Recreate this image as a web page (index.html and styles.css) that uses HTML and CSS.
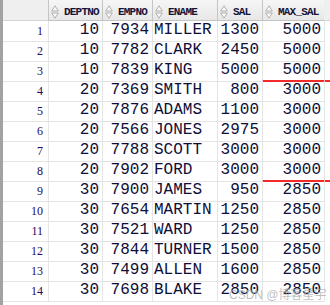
FILE: index.html
```html
<!DOCTYPE html>
<html>
<head>
<meta charset="utf-8">
<link rel="stylesheet" href="styles.css">
</head>
<body>
<div class="grid">
  <div class="row head">
    <div class="corner"></div>
    <div class="hc"><svg class="sort" viewBox="0 0 8 14" width="8" height="14"><path d="M4 0.8 L7.3 6 H0.7 Z M0.7 8 H7.3 L4 13.2 Z"/></svg><span>DEPTNO</span></div>
    <div class="hc"><svg class="sort" viewBox="0 0 8 14" width="8" height="14"><path d="M4 0.8 L7.3 6 H0.7 Z M0.7 8 H7.3 L4 13.2 Z"/></svg><span>EMPNO</span></div>
    <div class="hc"><svg class="sort" viewBox="0 0 8 14" width="8" height="14"><path d="M4 0.8 L7.3 6 H0.7 Z M0.7 8 H7.3 L4 13.2 Z"/></svg><span>ENAME</span></div>
    <div class="hc"><svg class="sort" viewBox="0 0 8 14" width="8" height="14"><path d="M4 0.8 L7.3 6 H0.7 Z M0.7 8 H7.3 L4 13.2 Z"/></svg><span>SAL</span></div>
    <div class="hc"><svg class="sort" viewBox="0 0 8 14" width="8" height="14"><path d="M4 0.8 L7.3 6 H0.7 Z M0.7 8 H7.3 L4 13.2 Z"/></svg><span>MAX_SAL</span></div>
    <div class="hfill"></div>
  </div>
  <div class="row"><div class="rn">1</div><div class="c n">10</div><div class="c n">7934</div><div class="c t">MILLER</div><div class="c n">1300</div><div class="c n">5000</div><div class="fill"></div></div>
  <div class="row"><div class="rn">2</div><div class="c n">10</div><div class="c n">7782</div><div class="c t">CLARK</div><div class="c n">2450</div><div class="c n">5000</div><div class="fill"></div></div>
  <div class="row"><div class="rn">3</div><div class="c n">10</div><div class="c n">7839</div><div class="c t">KING</div><div class="c n">5000</div><div class="c n mark">5000</div><div class="fill"></div></div>
  <div class="row"><div class="rn">4</div><div class="c n">20</div><div class="c n">7369</div><div class="c t">SMITH</div><div class="c n">800</div><div class="c n">3000</div><div class="fill"></div></div>
  <div class="row"><div class="rn">5</div><div class="c n">20</div><div class="c n">7876</div><div class="c t">ADAMS</div><div class="c n">1100</div><div class="c n">3000</div><div class="fill"></div></div>
  <div class="row"><div class="rn">6</div><div class="c n">20</div><div class="c n">7566</div><div class="c t">JONES</div><div class="c n">2975</div><div class="c n">3000</div><div class="fill"></div></div>
  <div class="row"><div class="rn">7</div><div class="c n">20</div><div class="c n">7788</div><div class="c t">SCOTT</div><div class="c n">3000</div><div class="c n">3000</div><div class="fill"></div></div>
  <div class="row"><div class="rn">8</div><div class="c n">20</div><div class="c n">7902</div><div class="c t">FORD</div><div class="c n">3000</div><div class="c n mark">3000</div><div class="fill"></div></div>
  <div class="row"><div class="rn">9</div><div class="c n">30</div><div class="c n">7900</div><div class="c t">JAMES</div><div class="c n">950</div><div class="c n">2850</div><div class="fill"></div></div>
  <div class="row"><div class="rn">10</div><div class="c n">30</div><div class="c n">7654</div><div class="c t">MARTIN</div><div class="c n">1250</div><div class="c n">2850</div><div class="fill"></div></div>
  <div class="row"><div class="rn">11</div><div class="c n">30</div><div class="c n">7521</div><div class="c t">WARD</div><div class="c n">1250</div><div class="c n">2850</div><div class="fill"></div></div>
  <div class="row"><div class="rn">12</div><div class="c n">30</div><div class="c n">7844</div><div class="c t">TURNER</div><div class="c n">1500</div><div class="c n">2850</div><div class="fill"></div></div>
  <div class="row"><div class="rn">13</div><div class="c n">30</div><div class="c n">7499</div><div class="c t">ALLEN</div><div class="c n">1600</div><div class="c n">2850</div><div class="fill"></div></div>
  <div class="row"><div class="rn">14</div><div class="c n">30</div><div class="c n">7698</div><div class="c t">BLAKE</div><div class="c n">2850</div><div class="c n">2850</div><div class="fill"></div></div>
  <div class="watermark">CSDN @博客星宇</div>
</div>
</body>
</html>
```

FILE: styles.css
```css
html, body {
  margin: 0;
  padding: 0;
  background: #ffffff;
}
.grid {
  position: relative;
  width: 330px;
  height: 305px;
  box-sizing: border-box;
  border-left: 3px solid #a2a2a2;
  overflow: hidden;
}
.row {
  display: grid;
  grid-template-columns: 45px 54px 50px 65px 45px 62px 1fr;
  height: 20px;
}
.row.head {
  height: 21px;
  background: #efefef;
}
.corner {
  background: #efefef;
  border-bottom: 1px solid #d4d4d4;
}
.hfill {
  background: #efefef;
  border-bottom: 1px solid #d4d4d4;
}
.hc {
  display: flex;
  align-items: center;
  box-sizing: border-box;
  padding: 3px 0 0 2px;
  background: linear-gradient(#f6f6f6, #e7e7e7);
  border-left: 1px solid #c4c4c4;
  border-bottom: 1px solid #c4c4c4;
  font-family: "Liberation Mono", monospace;
  font-weight: bold;
  font-size: 11px;
  letter-spacing: -0.8px;
  color: #14143a;
  white-space: nowrap;
  overflow: hidden;
}
.hc:last-of-type {
  border-right: 1px solid #c4c4c4;
}
.sort {
  flex: none;
  margin-right: 5px;
  fill: #fafafa;
  stroke: #a8a8a8;
  stroke-width: 0.9;
  stroke-linejoin: round;
}
.rn {
  box-sizing: border-box;
  text-align: right;
  padding-right: 5px;
  border-bottom: 1px solid #e4e4e4;
  font-family: "Liberation Serif", serif;
  font-size: 12px;
  line-height: 20px;
  color: #260a5c;
}
.c {
  box-sizing: border-box;
  border-left: 1px solid #e4e4e4;
  border-bottom: 1px solid #e4e4e4;
  font-family: "Liberation Mono", monospace;
  font-size: 16px;
  line-height: 19px;
  color: #0e0e38;
  white-space: nowrap;
}
.c.n {
  text-align: right;
  padding-right: 3px;
}
.c.t {
  padding-left: 1px;
}
.fill {
  border-left: 1px solid #e4e4e4;
  border-bottom: 1px solid transparent;
}
.c.mark,
.c.mark + .fill {
  border-bottom: 2px solid #f22a2a;
}
.watermark {
  position: absolute;
  left: 226px;
  top: 285px;
  font-family: "Liberation Sans", "Noto Sans CJK SC", sans-serif;
  font-size: 12px;
  color: rgba(175, 175, 175, 0.8);
  white-space: nowrap;
}
```
